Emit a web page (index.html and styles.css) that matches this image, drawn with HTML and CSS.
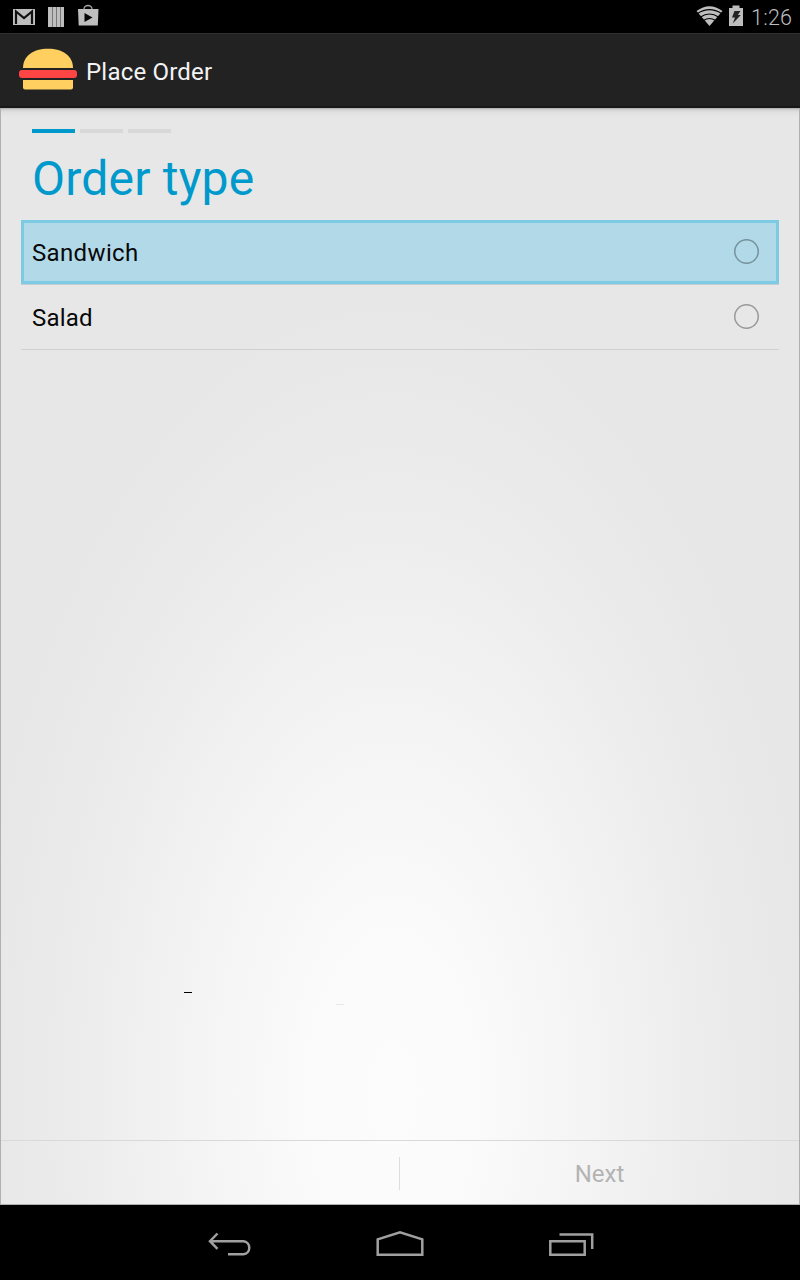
FILE: index.html
```html
<!DOCTYPE html>
<html lang="en">
<head>
<meta charset="utf-8">
<title>Place Order</title>
<link rel="stylesheet" href="styles.css">
</head>
<body>
<div class="device">
  <header class="status">
    <svg class="status-left" width="110" height="33" viewBox="0 0 110 33">
      <rect x="13" y="9" width="22" height="16" fill="#bebebe"/>
      <path d="M16 24V11.500L24 18L32 11.500V24" fill="none" stroke="#101010" stroke-width="2.200"/>
      <path d="M48 7h16v20H48z" fill="#bebebe"/>
      <path d="M52.500 7v20M56.500 7v20M60.500 7v20" stroke="#777" stroke-width="1"/>
      <path d="M84 10V9a4 3.500 0 0 1 8 0v1" fill="none" stroke="#a8a8a8" stroke-width="1.300"/>
      <path d="M78 9h20.500l-.7 16.500H78.700z" fill="#bebebe"/>
      <path d="M84.500 13v9l8-4.500z" fill="#050505"/>
    </svg>
    <svg class="status-right" width="50" height="33" viewBox="695 0 50 33">
      <path d="M696.500 11Q709.500 1.500 722.500 11L709.500 26z" fill="#bebebe"/>
      <path d="M697.500 13.500Q709.500 5.800 721.500 13.500M700.500 17Q709.500 11 718.500 17M703.500 20.500Q709.500 16.500 715.500 20.500" fill="none" stroke="#000" stroke-width="1.100"/>
      <path d="M729 8h3.500V5.500h7V8h3.500v18h-14z" fill="#bebebe"/>
      <path d="M734.500 11h6l-2.700 4h3l-8 8.500 2.200-6h-3z" fill="#222"/>
    </svg>
    <span class="clock">1:26</span>
  </header>
  <div class="action-bar">
    <svg class="burger" width="58" height="42" viewBox="0 0 58 42">
      <path d="M4 20C4 8 14 .7 29 .7S54 8 54 20z" fill="#ffcf60"/>
      <rect x="0" y="22" width="58" height="8" rx="3" fill="#ff4444"/>
      <path d="M4 32h50v7.500a2 2 0 0 1-2 2H6a2 2 0 0 1-2-2z" fill="#ffcf60"/>
    </svg>
    <h1 class="app-title">Place Order</h1>
  </div>
  <main class="content">
    <div class="steps"><i class="step on"></i><i class="step"></i><i class="step"></i></div>
    <h2 class="heading"><span>Order type</span></h2>
    <ul class="options">
      <li class="option selected"><span class="sandwich">Sandwich</span><i class="radio"></i></li>
      <li class="option"><span class="salad">Salad</span><i class="radio"></i></li>
    </ul>
    <i class="speck dark"></i>
    <i class="speck pale"></i>
    <footer class="pager">
      <div class="prev"></div>
      <div class="divider"></div>
      <div class="next"><span>Next</span></div>
    </footer>
  </main>
  <nav class="nav">
    <svg width="800" height="75" viewBox="0 1205 800 75" fill="none" stroke="#a0a0a0" stroke-width="2.500">
      <path d="M217.500 1233.500L210 1241.200L217.500 1248.800M210 1241.200H243.500A6.600 6.600 0 0 1 243.500 1254.300H228"/>
      <path d="M377.700 1254.700V1239.300L400 1232.200L422.300 1239.300V1254.700z"/>
      <path d="M550.300 1241.200h34.400v13.500h-34.400zM559.500 1234.500h32.700V1249"/>
    </svg>
  </nav>
</div>
</body>
</html>
```
FILE: styles.css
```css
* { box-sizing: border-box; }
body { margin: 0; background: #000; font-family: Roboto, sans-serif; }
.device { width: 800px; height: 1280px; display: flex; flex-direction: column; overflow: hidden; }
.status { height: 33px; display: flex; background: #000; }
.status svg { display: block; }
.status-right { margin-left: auto; }
.clock { width: 55px; padding-left: 6px; font-size: 21.500px; letter-spacing: .25px; line-height: 35px; color: #bebebe; font-weight: 300; white-space: nowrap; }
.action-bar { height: 75px; display: flex; align-items: flex-start; background: #222; border-top: 1px solid #303030; border-bottom: 2px solid #191919; }
.burger { display: block; margin: 14px 0 0 19px; }
.app-title { margin: 0 0 0 9px; font-size: 24px; letter-spacing: .2px; line-height: 76px; font-weight: 400; color: #f3f3f3; }
.content {
  position: relative; height: 1097px; display: flex; flex-direction: column;
  border: 1px solid #b0b0b0; border-top: 0;
  background:
    linear-gradient(rgba(0,0,0,.25), rgba(0,0,0,.08) 2px, rgba(0,0,0,.02) 5px, transparent 10px),
    radial-gradient(ellipse 425px 800px at 391px 985px, #fcfcfc 0%, #fafafa 23%, #f3f3f3 50%, #ebebeb 78%, #e7e7e7 100%);
}
.steps { display: flex; gap: 5px; padding: 21px 0 0 31px; }
.step { width: 43px; height: 4px; background: #d8d8d8; }
.step.on { background: #0099cc; }
.heading { height: 87px; margin: 0; padding-left: 31px; font-size: 48px; letter-spacing: .2px; line-height: 91px; font-weight: 400; color: #0099cc; }
.options { list-style: none; margin: 0 20px; padding: 0; }
.option { height: 65px; display: flex; justify-content: space-between; align-items: center; padding: 0 20px 1px 11px; font-size: 24px; color: #080808; border-bottom: 1px solid #d0d0d0; }
.option span { padding-top: 2px; }
.sandwich { letter-spacing: .35px; }
.salad { letter-spacing: .2px; }
.option.selected { background: #b1d9e8; border-bottom-color: #c4cdd1; box-shadow: inset 0 0 0 3px #7dcae5; }
.radio { width: 25px; height: 25px; border-radius: 50%; box-shadow: inset 0 0 0 1.500px #999; }
.selected .radio { box-shadow: inset 0 0 0 1.500px #76929c; }
.speck { position: absolute; width: 8px; height: 1px; }
.dark { left: 183px; top: 884px; background: #000; }
.pale { left: 335px; top: 896px; background: #e8e8e8; }
.pager { height: 64px; margin-top: auto; display: flex; align-items: center; border-top: 1px solid #d9d9d9; }
.prev { width: 398px; }
.divider { width: 1px; height: 33px; margin-top: 2px; background: #dedede; }
.next { flex: 1; padding-top: 2px; text-align: center; font-size: 24px; line-height: 60px; color: #b3b3b3; }
.nav { height: 75px; background: #000; }
.nav svg { display: block; }
```
